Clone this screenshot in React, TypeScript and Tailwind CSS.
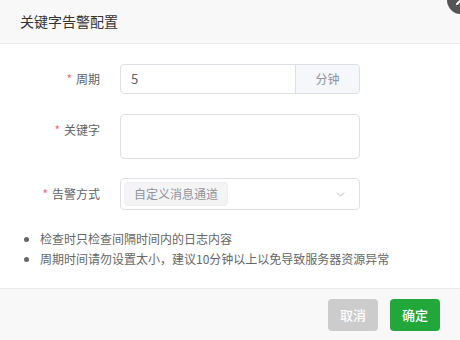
import React from "react";
import { ChevronDown } from "lucide-react";

const font = { fontFamily: '"Noto Sans CJK SC", "Noto Sans", sans-serif' };

function Label({ text, tall }: { text: string; tall?: boolean }) {
  return (
    <div
      className={
        "w-[120px] shrink-0 pr-5 flex items-center justify-end text-[12px] text-[#606266] " +
        (tall ? "h-[32px]" : "h-[30px]")
      }
    >
      <span className="text-[#f56c6c] mr-1">*</span>
      {text}
    </div>
  );
}

export default function App() {
  return (
    <div className="relative w-[460px] h-[340px] overflow-hidden bg-white" style={font}>
      {/* Close button, partly off the edge */}
      <div className="absolute left-[447px] top-[-14px] w-[28px] h-[28px] rounded-full bg-[#555] flex items-center justify-center z-10">
        <svg width="12" height="12" viewBox="0 0 12 12" stroke="white" strokeWidth="2" strokeLinecap="round">
          <path d="M2 2 L10 10 M10 2 L2 10" />
        </svg>
      </div>

      {/* Header */}
      <div className="h-[44px] bg-[#f8f8f8] border-b border-[#eaeaea] flex items-center px-5">
        <span className="text-[14px] text-[#333]">关键字告警配置</span>
      </div>

      {/* Form */}
      <div className="pt-5 flex flex-col">
        <div className="flex items-start">
          <Label text="周期" />
          <div className="w-[240px] h-[30px] flex border border-[#dcdfe6] rounded">
            <div className="flex-1 flex items-center pl-[10px] text-[13px] text-[#606266]">5</div>
            <div className="w-[64px] bg-[#f5f7fa] border-l border-[#dcdfe6] rounded-r flex items-center justify-center text-[12px] text-[#909399]">
              分钟
            </div>
          </div>
        </div>

        <div className="flex items-start mt-5">
          <Label text="关键字" tall />
          <div className="w-[240px] h-[45px] border border-[#dcdfe6] rounded" />
        </div>

        <div className="flex items-start mt-[19px]">
          <Label text="告警方式" tall />
          <div className="w-[240px] h-[32px] border border-[#dcdfe6] rounded flex items-center pl-[3px] pr-[12px]">
            <div className="h-[24px] px-[9px] bg-[#f4f4f5] border border-[#efefef] rounded flex items-center text-[12px] text-[#909399]">
              自定义消息通道
            </div>
            <div className="flex-1" />
            <ChevronDown size={13} strokeWidth={1.5} className="text-[#a8abb2]" />
          </div>
        </div>

        <ul className="mt-[19px] pl-[40px] text-[12px] text-[#666] leading-[20px] list-disc">
          <li>检查时只检查间隔时间内的日志内容</li>
          <li>周期时间请勿设置太小，建议10分钟以上以免导致服务器资源异常</li>
        </ul>
      </div>

      {/* Footer */}
      <div className="absolute left-0 right-0 top-[288px] bottom-0 bg-[#f8f8f8] border-t border-[#eaeaea] flex justify-end items-start pt-[10px] pr-5 gap-3">
        <button className="w-[50px] h-[32px] rounded bg-[#cccccc] text-white text-[13px] font-medium">取消</button>
        <button className="w-[50px] h-[32px] rounded bg-[#22a83a] text-white text-[13px] font-medium">确定</button>
      </div>
    </div>
  );
}
